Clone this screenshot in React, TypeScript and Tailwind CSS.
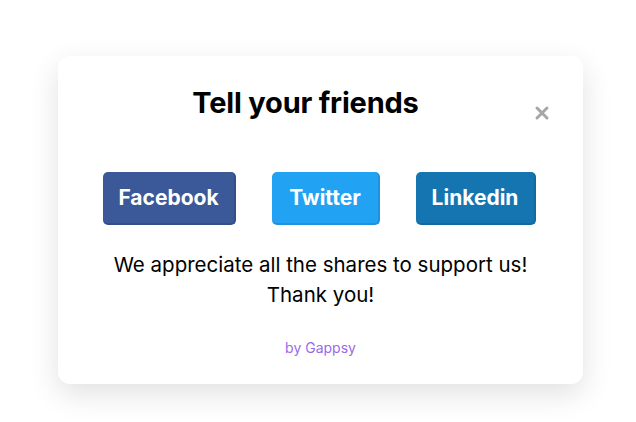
import React from "react";

export default function App() {
  return (
    <div className="w-[636px] h-[422px] bg-white flex justify-start pl-[58px] pt-[56px]" style={{ fontFamily: "Inter, 'Noto Sans', sans-serif" }}>
      <div className="w-[525px] h-[328px] bg-white rounded-[12px] shadow-[0_10px_30px_rgba(0,0,0,0.12)] flex flex-col items-center">
        <div className="w-full flex items-start pl-[24px] pr-[28px] pt-[28px]">
          <h1 className="flex-1 text-center text-[29px] leading-[37px] font-bold text-black tracking-[-0.2px]">Tell your friends</h1>
          <button className="w-[26px] mt-[21px] flex justify-center">
            <svg width="16" height="16" viewBox="0 0 16 16">
              <path d="M3 3 L13 13 M13 3 L3 13" stroke="#a6a6a6" strokeWidth="3" strokeLinecap="round" />
            </svg>
          </button>
        </div>
        <div className="flex gap-[36px] mt-[51px] mr-[2px]">
          <button className="h-[53px] w-[133px] rounded-[5px] bg-[#3b5998] border-r-2 border-b-2 border-[#344f88] text-white font-bold text-[21px]">Facebook</button>
          <button className="h-[53px] w-[108px] rounded-[5px] bg-[#22a2f2] border-r-2 border-b-2 border-[#1d93e0] text-white font-bold text-[21px]">Twitter</button>
          <button className="h-[53px] w-[120px] rounded-[5px] bg-[#1575b1] border-r-2 border-b-2 border-[#126aa1] text-white font-bold text-[21px]">Linkedin</button>
        </div>
        <p className="mt-[25px] text-center text-[20.5px] leading-[30px] text-black">We appreciate all the shares to support us!<br />Thank you!</p>
        <p className="mt-[27px] text-[14px] text-[#9a6ae8]">by Gappsy</p>
      </div>
    </div>
  );
}
